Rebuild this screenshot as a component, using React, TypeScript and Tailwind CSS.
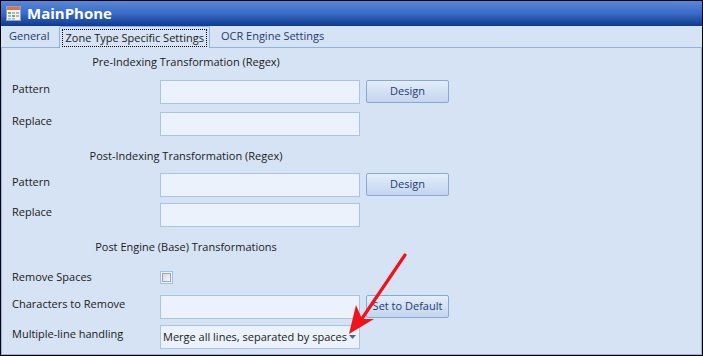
import React from 'react';

const font = { fontFamily: '"Segoe UI", "Open Sans", "Noto Sans", sans-serif' };

// small calendar-like window icon
const AppIcon = () => (
  <svg width="15" height="15" viewBox="0 0 15 15">
    <rect x="0.5" y="0.5" width="14" height="14" fill="#f4f4f4" stroke="#8aa4c8" />
    <rect x="1" y="1" width="13" height="3" fill="#e8703a" />
    <rect x="2" y="6" width="3" height="2" fill="#7cb342" />
    <rect x="6" y="6" width="3" height="2" fill="#9fb8dc" />
    <rect x="10" y="6" width="3" height="2" fill="#9fb8dc" />
    <rect x="2" y="9" width="3" height="2" fill="#9fb8dc" />
    <rect x="6" y="9" width="3" height="2" fill="#7cb342" />
    <rect x="10" y="9" width="3" height="2" fill="#9fb8dc" />
    <rect x="2" y="12" width="3" height="1.5" fill="#9fb8dc" />
    <rect x="6" y="12" width="3" height="1.5" fill="#9fb8dc" />
  </svg>
);

const Field = () => (
  <div className="w-[200px] h-[24px] bg-[#ebf2fb] border border-[#a9c3e6]" />
);

const Btn = ({ label }: { label: string }) => (
  <div className="ml-[6px] w-[83px] h-[23px] rounded-[2px] border border-[#88a8d6] bg-gradient-to-b from-[#e4eefa] via-[#d3e1f4] to-[#c3d5ee] flex items-center justify-center text-[11px] text-[#1f3a70]">
    {label}
  </div>
);

const Row = ({ label, children }: { label: string; children: React.ReactNode }) => (
  <div className="flex items-start">
    <div className="w-[158px] pl-[10px] pt-[1px] text-[11px] text-[#1a1a1a] leading-[16px]">{label}</div>
    <div className="flex items-start">{children}</div>
  </div>
);

const Header = ({ text }: { text: string }) => (
  <div className="w-[368px] text-center text-[11px] leading-[16px] text-[#1a1a1a]">{text}</div>
);

export default function App() {
  return (
    <div style={font} className="relative w-[703px] h-[356px] border border-black bg-[#d6e3f4] flex flex-col overflow-hidden">
      {/* title bar */}
      <div className="h-[25px] shrink-0 bg-gradient-to-b from-[#5788da] via-[#3a6ac4] to-[#0d3a91] flex items-center pl-[5px] gap-[6px]">
        <AppIcon />
        <span className="text-white font-bold text-[15px] leading-none">MainPhone</span>
      </div>

      {/* tab strip */}
      <div className="h-[22px] shrink-0 bg-[#d5e3f4] flex items-end pl-[1px] text-[11px] text-[#1e3a6e] border-b border-[#8fb2e3]">
        <div className="h-[21px] px-[7px] flex items-center">General</div>
        <div className="h-[22px] ml-[3px] px-[2px] flex items-center bg-[#d6e3f4] border border-b-0 border-[#8fb2e3] rounded-t-[2px] relative top-[1px]">
          <span className="px-[2px] border border-dotted border-black leading-[16px] text-[#1a1a1a]">Zone Type Specific Settings</span>
        </div>
        <div className="h-[21px] px-[11px] flex items-center">OCR Engine Settings</div>
      </div>

      {/* content */}
      <div className="flex-1 border-x border-b border-[#8fb2e3] flex flex-col pt-[6px]">
        <Header text="Pre-Indexing Transformation (Regex)" />
        <div className="mt-[10px] flex flex-col gap-[8px]">
          <Row label="Pattern">
            <Field />
            <Btn label="Design" />
          </Row>
          <Row label="Replace">
            <Field />
          </Row>
        </div>

        <div className="mt-[12px]">
          <Header text="Post-Indexing Transformation (Regex)" />
        </div>
        <div className="mt-[9px] flex flex-col gap-[6px]">
          <Row label="Pattern">
            <Field />
            <Btn label="Design" />
          </Row>
          <Row label="Replace">
            <Field />
          </Row>
        </div>

        <div className="mt-[12px]">
          <Header text="Post Engine (Base) Transformations" />
        </div>
        <div className="mt-[10px] flex flex-col gap-[6px]">
          <div className="flex items-center h-[24px]">
            <div className="w-[158px] pl-[10px] text-[11px] text-[#1a1a1a] leading-[16px]">Remove Spaces</div>
            <div className="w-[13px] h-[13px] border border-[#a4bfe6] bg-[#eef3fa] p-[1px]">
              <div className="w-full h-full border border-[#9aa6b4] bg-gradient-to-br from-[#d4d8de] to-[#f7f8fa]" />
            </div>
          </div>
          <Row label="Characters to Remove">
            <Field />
            <Btn label="Set to Default" />
          </Row>
          <Row label="Multiple-line handling">
            <div className="w-[200px] h-[24px] bg-[#ebf2fb] border border-[#a9c3e6] flex items-center pl-[2px] pr-[3px] text-[11px] text-[#1a1a1a]">
              <span className="flex-1 whitespace-nowrap">Merge all lines, separated by spaces</span>
              <svg width="7" height="4" viewBox="0 0 7 4"><polygon points="0,0 7,0 3.5,4" fill="#4d6891" /></svg>
            </div>
          </Row>
        </div>
      </div>

      {/* red annotation arrow */}
      <svg className="absolute left-0 top-0 pointer-events-none" width="703" height="356" viewBox="0 0 703 356">
        <line x1="404" y1="254" x2="358" y2="322" stroke="#f0141a" strokeWidth="3.2" strokeLinecap="round" />
        <polygon points="348,333 355,304 361,318 373,318" fill="#f0141a" />
      </svg>
    </div>
  );
}
